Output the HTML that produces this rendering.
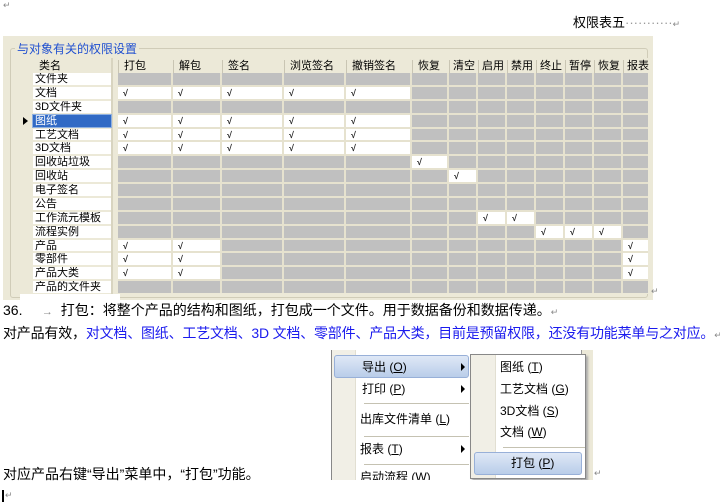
<!DOCTYPE html>
<html><head><meta charset="utf-8"><style>
*{margin:0;padding:0;box-sizing:border-box}
body{width:720px;height:504px;background:#fff;position:relative;overflow:hidden;font-family:"Liberation Sans","Noto Sans CJK SC",sans-serif;color:#000}
.a{position:absolute;white-space:nowrap}
.grid{position:absolute;display:grid;gap:2px;background:#e6e2cf}
.g{background:#c0c0c0;position:relative}
.w{background:#fff;position:relative}
.w i{position:absolute;left:5px;top:0px;font-style:normal;font-size:9px;line-height:12px;color:#222;font-weight:bold}
.nm{background:#fff;font-size:11px;line-height:13px;padding-left:2px;overflow:hidden}
.hd{font-size:11px;top:60px;height:13px;line-height:13px;padding-left:5px;border-left:1px solid #c9c5b3}
.mi{position:absolute;font-size:12px;line-height:14px}
.sep{position:absolute;height:1px;background:#c5c2b2}
.hl{position:absolute;background:linear-gradient(#dfe8f6,#b9cde9);border:1px solid #98b0d8;border-radius:3px}
</style></head><body>
<div class="a" style="left:3px;top:0;font-size:9px;color:#888">↵</div>
<div class="a" style="left:573px;top:12px;font-size:13px">权限表五<span style="color:#999;letter-spacing:0px">···········</span><span style="color:#888;font-size:9px">↵</span></div>

<div class="a" style="left:3px;top:36px;width:650px;height:264px;background:#ece9d8"></div>
<div class="a" style="left:10px;top:48px;width:638px;height:250px;border:1px solid #d0ccb8;border-radius:3px"></div>
<div class="a" style="left:15px;top:40px;font-size:12px;color:#2050d0;background:#ece9d8;padding:0 2px">与对象有关的权限设置</div>
<div class="a" style="left:20px;top:58px;width:628px;height:236px;background:#ece9d8"></div>
<div class="a" style="left:20px;top:294px;width:100px;height:7px;background:#fff"></div>

<div class="a hd" style="left:33px;width:78px;border-left:none;padding-left:6px">类名</div>
<div class="a hd" style="left:118px;width:55px">打包</div>
<div class="a hd" style="left:173px;width:49px">解包</div>
<div class="a hd" style="left:222px;width:62px">签名</div>
<div class="a hd" style="left:284px;width:62px">浏览签名</div>
<div class="a hd" style="left:346px;width:66px">撤销签名</div>
<div class="a hd" style="left:412px;width:37px">恢复</div>
<div class="a hd" style="left:449px;width:29px;padding-left:3px">清空</div>
<div class="a hd" style="left:478px;width:29px;padding-left:3px">启用</div>
<div class="a hd" style="left:507px;width:29px;padding-left:3px">禁用</div>
<div class="a hd" style="left:536px;width:29px;padding-left:3px">终止</div>
<div class="a hd" style="left:565px;width:29px;padding-left:3px">暂停</div>
<div class="a hd" style="left:594px;width:29px;padding-left:3px">恢复</div>
<div class="a hd" style="left:623px;width:27px;padding-left:3px">报表</div>
<div class="a" style="left:111px;top:58px;width:2px;height:236px;background:#d8d4c0"></div>

<div class="grid" style="left:33px;top:73px;width:78px;height:220px;grid-template-columns:1fr;grid-template-rows:repeat(16,1fr);background:#ece9d8">
<div class="nm">文件夹</div><div class="nm">文档</div><div class="nm">3D文件夹</div>
<div class="nm" style="background:#316ac5;color:#fff;outline:1px solid #8fb0e0">图纸</div>
<div class="nm">工艺文档</div><div class="nm">3D文档</div><div class="nm">回收站垃圾</div><div class="nm">回收站</div>
<div class="nm">电子签名</div><div class="nm">公告</div><div class="nm">工作流元模板</div><div class="nm">流程实例</div>
<div class="nm">产品</div><div class="nm">零部件</div><div class="nm">产品大类</div><div class="nm">产品的文件夹</div>
</div>
<div class="a" style="left:23px;top:117px;width:0;height:0;border-left:5px solid #000;border-top:4px solid transparent;border-bottom:4px solid transparent"></div>

<div class="grid" style="left:118px;top:73px;width:530px;height:220px;grid-template-columns:53px 47px 60px 60px 64px 35px 27px 27px 27px 27px 27px 27px 25px;grid-template-rows:repeat(16,1fr)">
<div class="g"></div><div class="g"></div><div class="g"></div><div class="g"></div><div class="g"></div><div class="g"></div><div class="g"></div><div class="g"></div><div class="g"></div><div class="g"></div><div class="g"></div><div class="g"></div><div class="g"></div>
<div class="w"><i>√</i></div><div class="w"><i>√</i></div><div class="w"><i>√</i></div><div class="w"><i>√</i></div><div class="w"><i>√</i></div><div class="g"></div><div class="g"></div><div class="g"></div><div class="g"></div><div class="g"></div><div class="g"></div><div class="g"></div><div class="g"></div>
<div class="g"></div><div class="g"></div><div class="g"></div><div class="g"></div><div class="g"></div><div class="g"></div><div class="g"></div><div class="g"></div><div class="g"></div><div class="g"></div><div class="g"></div><div class="g"></div><div class="g"></div>
<div class="w"><i>√</i></div><div class="w"><i>√</i></div><div class="w"><i>√</i></div><div class="w"><i>√</i></div><div class="w"><i>√</i></div><div class="g"></div><div class="g"></div><div class="g"></div><div class="g"></div><div class="g"></div><div class="g"></div><div class="g"></div><div class="g"></div>
<div class="w"><i>√</i></div><div class="w"><i>√</i></div><div class="w"><i>√</i></div><div class="w"><i>√</i></div><div class="w"><i>√</i></div><div class="g"></div><div class="g"></div><div class="g"></div><div class="g"></div><div class="g"></div><div class="g"></div><div class="g"></div><div class="g"></div>
<div class="w"><i>√</i></div><div class="w"><i>√</i></div><div class="w"><i>√</i></div><div class="w"><i>√</i></div><div class="w"><i>√</i></div><div class="g"></div><div class="g"></div><div class="g"></div><div class="g"></div><div class="g"></div><div class="g"></div><div class="g"></div><div class="g"></div>
<div class="g"></div><div class="g"></div><div class="g"></div><div class="g"></div><div class="g"></div><div class="w"><i>√</i></div><div class="g"></div><div class="g"></div><div class="g"></div><div class="g"></div><div class="g"></div><div class="g"></div><div class="g"></div>
<div class="g"></div><div class="g"></div><div class="g"></div><div class="g"></div><div class="g"></div><div class="g"></div><div class="w"><i>√</i></div><div class="g"></div><div class="g"></div><div class="g"></div><div class="g"></div><div class="g"></div><div class="g"></div>
<div class="g"></div><div class="g"></div><div class="g"></div><div class="g"></div><div class="g"></div><div class="g"></div><div class="g"></div><div class="g"></div><div class="g"></div><div class="g"></div><div class="g"></div><div class="g"></div><div class="g"></div>
<div class="g"></div><div class="g"></div><div class="g"></div><div class="g"></div><div class="g"></div><div class="g"></div><div class="g"></div><div class="g"></div><div class="g"></div><div class="g"></div><div class="g"></div><div class="g"></div><div class="g"></div>
<div class="g"></div><div class="g"></div><div class="g"></div><div class="g"></div><div class="g"></div><div class="g"></div><div class="g"></div><div class="w"><i>√</i></div><div class="w"><i>√</i></div><div class="g"></div><div class="g"></div><div class="g"></div><div class="g"></div>
<div class="g"></div><div class="g"></div><div class="g"></div><div class="g"></div><div class="g"></div><div class="g"></div><div class="g"></div><div class="g"></div><div class="g"></div><div class="w"><i>√</i></div><div class="w"><i>√</i></div><div class="w"><i>√</i></div><div class="g"></div>
<div class="w"><i>√</i></div><div class="w"><i>√</i></div><div class="g"></div><div class="g"></div><div class="g"></div><div class="g"></div><div class="g"></div><div class="g"></div><div class="g"></div><div class="g"></div><div class="g"></div><div class="g"></div><div class="w"><i>√</i></div>
<div class="w"><i>√</i></div><div class="w"><i>√</i></div><div class="g"></div><div class="g"></div><div class="g"></div><div class="g"></div><div class="g"></div><div class="g"></div><div class="g"></div><div class="g"></div><div class="g"></div><div class="g"></div><div class="w"><i>√</i></div>
<div class="w"><i>√</i></div><div class="w"><i>√</i></div><div class="g"></div><div class="g"></div><div class="g"></div><div class="g"></div><div class="g"></div><div class="g"></div><div class="g"></div><div class="g"></div><div class="g"></div><div class="g"></div><div class="w"><i>√</i></div>
<div class="g"></div><div class="g"></div><div class="g"></div><div class="g"></div><div class="g"></div><div class="g"></div><div class="g"></div><div class="g"></div><div class="g"></div><div class="g"></div><div class="g"></div><div class="g"></div><div class="g"></div>
</div>
<div class="a" style="left:651px;top:286px;font-size:9px;color:#888">↵</div>

<div class="a" style="left:3px;top:301px;font-size:14px;line-height:18px">36.&nbsp;&nbsp;&nbsp;&nbsp;&nbsp;<span style="color:#888;font-size:11px">→</span>&nbsp; 打包：将整个产品的结构和图纸，打包成一个文件。用于数据备份和数据传递。<span style="color:#888;font-size:9px">↵</span></div>
<div class="a" style="left:3px;top:324px;font-size:14px;line-height:18px;letter-spacing:-0.2px">对产品有效，<span style="color:#1a1aee">对文档、图纸、工艺文档、3D 文档、零部件、产品大类，目前是预留权限，还没有功能菜单与之对应。</span><span style="color:#888;font-size:9px">↵</span></div>

<div class="a" style="left:3px;top:465px;font-size:14px;line-height:18px">对应产品右键“导出”菜单中，“打包”功能。</div>
<div class="a" style="left:2px;top:490px;width:2px;height:12px;background:#000"></div>
<div class="a" style="left:5px;top:490px;font-size:9px;color:#888">↵</div>

<div class="a" style="left:331px;top:350px;width:262px;height:130px;overflow:hidden">
  <div class="a" style="left:250px;top:0;width:12px;height:130px;background:#ece9d8;border-left:1px solid #999"></div>
  <div class="a" style="left:0;top:0;width:140px;height:140px;background:#fff;border-left:1px solid #888"></div>
  <div class="a" style="left:1px;top:0;width:24px;height:140px;background:#f1efe6;border-right:1px solid #e2dfd2"></div>
  <div class="hl" style="left:3px;top:5px;width:135px;height:23px"></div>
  <div class="mi" style="left:31px;top:10px">导出 (<u>O</u>)</div><div class="a" style="left:130px;top:13px;border-left:4px solid #000;border-top:4px solid transparent;border-bottom:4px solid transparent"></div>
  <div class="mi" style="left:31px;top:32px">打印 (<u>P</u>)</div><div class="a" style="left:130px;top:35px;border-left:4px solid #000;border-top:4px solid transparent;border-bottom:4px solid transparent"></div>
  <div class="sep" style="left:33px;top:53px;width:105px"></div>
  <div class="mi" style="left:29px;top:62px">出库文件清单 (<u>L</u>)</div>
  <div class="sep" style="left:33px;top:86px;width:105px"></div>
  <div class="mi" style="left:29px;top:92px">报表 (<u>T</u>)</div><div class="a" style="left:130px;top:95px;border-left:4px solid #000;border-top:4px solid transparent;border-bottom:4px solid transparent"></div>
  <div class="sep" style="left:33px;top:114px;width:105px"></div>
  <div class="mi" style="left:29px;top:120px">启动流程 (<u>W</u>)</div>

  <div class="a" style="left:139px;top:4px;width:116px;height:125px;background:#fff;border:1px solid #888;box-shadow:2px 2px 2px #aaa"></div>
  <div class="a" style="left:140px;top:5px;width:25px;height:123px;background:#f1efe6;border-right:1px solid #e2dfd2"></div>
  <div class="mi" style="left:169px;top:10px">图纸 (<u>T</u>)</div>
  <div class="mi" style="left:169px;top:32px">工艺文档 (<u>G</u>)</div>
  <div class="mi" style="left:169px;top:54px">3D文档 (<u>S</u>)</div>
  <div class="mi" style="left:169px;top:75px">文档 (<u>W</u>)</div>
  <div class="sep" style="left:172px;top:97px;width:82px"></div>
  <div class="hl" style="left:143px;top:102px;width:108px;height:23px"></div>
  <div class="mi" style="left:180px;top:106px">打包 (<u>P</u>)</div>
</div>
<div class="a" style="left:594px;top:468px;font-size:9px;color:#888">↵</div>
</body></html>
